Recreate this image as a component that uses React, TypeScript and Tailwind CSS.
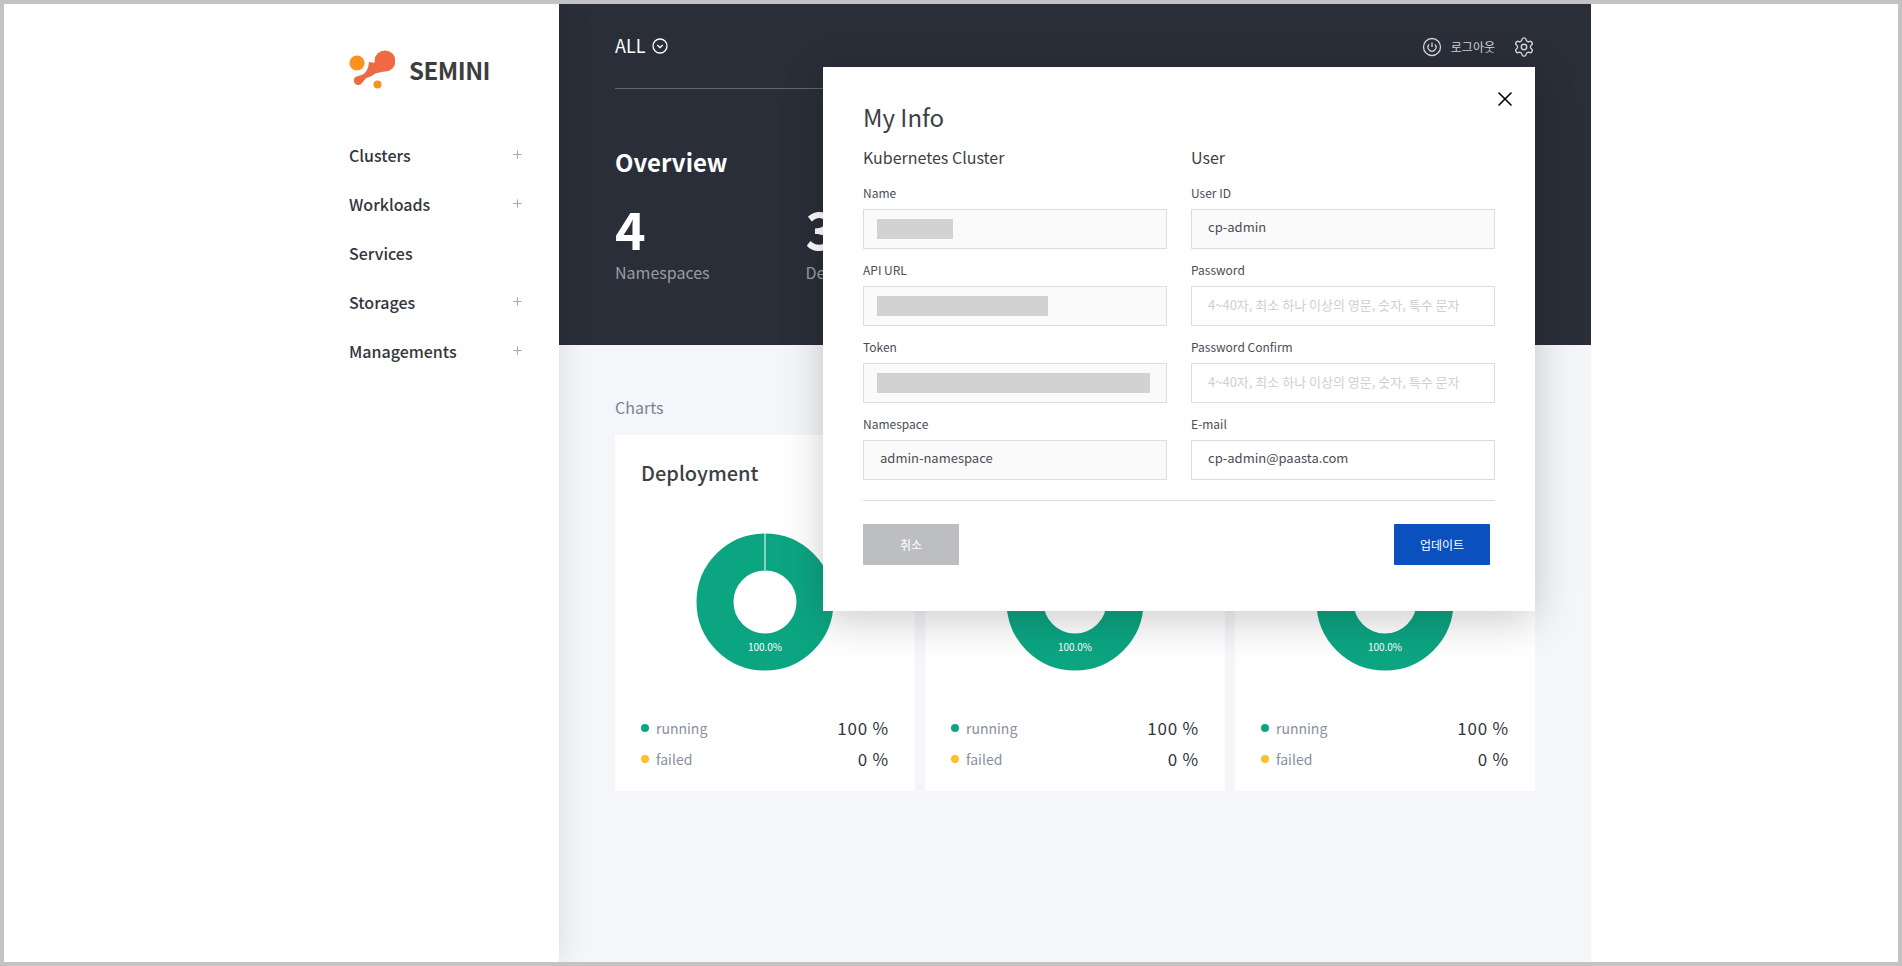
import { Plus, Settings, X } from "lucide-react";

const FONT = "font-['Noto_Sans_CJK_KR','Noto_Sans',sans-serif]";

const navItems = [
  { label: "Clusters", sub: true },
  { label: "Workloads", sub: true },
  { label: "Services", sub: false },
  { label: "Storages", sub: true },
  { label: "Managements", sub: true },
];

function Logo() {
  return (
    <div className="flex items-center gap-[14px]">
      <svg width="46" height="40" viewBox="0 0 46 40">
        <circle cx="8" cy="13" r="7.6" fill="#f7931e" />
        <circle cx="36" cy="11" r="10.5" fill="#ef6a42" />
        <path d="M28 13 C30 22 24 26 20 27 C16 28 15 31 13 33 A4.5 4.5 0 1 1 9 26 C15 25 19 22 20 12 Z" fill="#ef6a42" />
        <path d="M27 5 L37 21 L24 24 Z" fill="#ef6a42" />
        <circle cx="28.5" cy="34.5" r="4" fill="#f7931e" />
      </svg>
      <span className="text-[24px] leading-none font-bold tracking-[-0.5px] text-[#3d3d3d]">SEMINI</span>
    </div>
  );
}

function Field({ label, value, hint, bar, editable }: { label: string; value?: string; hint?: string; bar?: string; editable?: boolean }) {
  return (
    <div>
      <p className="mb-[6px] text-[12px] leading-[20px] text-[#4a4d55]">{label}</p>
      <div className={`flex h-10 items-center border border-[#dddddd] px-[16px] text-[13px] ${editable ? "bg-white" : "bg-[#fafafa]"}`}>
        {bar && <div className={`-ml-[3px] h-5 bg-[#d2d2d2] ${bar}`} />}
        {value && <span className="-mt-[4px] text-[#4a4d55]">{value}</span>}
        {hint && <span className="-mt-[2px] text-[#cfcfcf]">{hint}</span>}
      </div>
    </div>
  );
}

function ChartCard({ title }: { title?: string }) {
  return (
    <div className="flex h-[356px] w-[300px] flex-col bg-white px-[26px]">
      <h3 className="mt-[24px] h-[28px] text-[20px] leading-[28px] font-medium text-[#3d3f46]">{title}</h3>
      <div className="relative mt-[46px] flex justify-center">
        <svg width="138" height="138" viewBox="0 0 138 138">
          <circle cx="69" cy="69" r="50" fill="none" stroke="#0ca582" strokeWidth="37" />
          <line x1="69" y1="0" x2="69" y2="37" stroke="#ffffff" strokeWidth="1" />
        </svg>
        <span className="absolute top-[107px] text-[10px] leading-[14px] text-white">100.0%</span>
      </div>
      <div className="mt-[46px] flex flex-col gap-[9px]">
        <div className="flex h-[22px] items-center">
          <span className="mr-[7px] h-2 w-2 rounded-full bg-[#0ca582]" />
          <span className="text-[14px] text-[#8a8f9e]">running</span>
          <span className="ml-auto text-[17px] tracking-[0.8px] text-[#33353c]">100 %</span>
        </div>
        <div className="flex h-[22px] items-center">
          <span className="mr-[7px] h-2 w-2 rounded-full bg-[#fdbf2d]" />
          <span className="text-[14px] text-[#8a8f9e]">failed</span>
          <span className="ml-auto text-[17px] tracking-[0.8px] text-[#33353c]">0 %</span>
        </div>
      </div>
    </div>
  );
}

export default function App() {
  return (
    <div className={`${FONT} relative h-[966px] w-[1902px] overflow-hidden border-4 border-[#c3c3c3] bg-white`}>
      <div className="flex h-full">
        {/* Sidebar */}
        <aside className="relative z-10 w-[555px] bg-white pt-[46px] pl-[345px] shadow-[0_0_30px_rgba(0,0,0,0.12)]">
          <Logo />
          <nav className="mt-[40px] w-[175px]">
            {navItems.map((item) => (
              <div key={item.label} className="flex h-[49px] items-center justify-between text-[16px] font-medium text-[#33353c]">
                {item.label}
                {item.sub && <Plus size={13} className="text-[#a5a9b2]" />}
              </div>
            ))}
          </nav>
        </aside>

        {/* Main */}
        <main className="flex w-[1032px] flex-col bg-[#f4f6fa]">
          <header className="h-[341px] bg-[#2a2e38] px-[56px]">
            <div className="flex h-[85px] items-start justify-between border-b border-[#62656e] pt-[28px]">
              <div className="flex items-center gap-[6px] text-[18px] leading-[26px] text-white">
                ALL
                <svg width="16" height="16" viewBox="0 0 16 16" fill="none" stroke="#ffffff" strokeWidth="1.3" className="mt-[2px]">
                  <circle cx="8" cy="8" r="7" />
                  <path d="M5.2 7 L8 9.6 L10.8 7" />
                </svg>
              </div>
              <div className="flex items-center gap-[18px] pt-[4px] text-[#d4d5d8]">
                <div className="flex items-center gap-[9px]">
                  <svg width="20" height="20" viewBox="0 0 20 20" fill="none" stroke="currentColor" strokeWidth="1.3">
                    <circle cx="10" cy="10" r="8.5" />
                    <path d="M7 7.5 A4 4 0 1 0 13 7.5 M10 5.5 V10" />
                  </svg>
                  <span className="text-[12px]">로그아웃</span>
                </div>
                <Settings size={22} strokeWidth={1.5} />
              </div>
            </div>
            <h1 className="mt-[55px] text-[24px] leading-[36px] font-bold text-white">Overview</h1>
            <div className="mt-[16px] flex gap-[96px]">
              <div>
                <p className="text-[52px] leading-[64px] font-bold text-white">4</p>
                <p className="text-[16px] leading-[24px] text-[#9a9ca3]">Namespaces</p>
              </div>
              <div>
                <p className="text-[52px] leading-[64px] font-bold text-white">3</p>
                <p className="text-[16px] leading-[24px] text-[#9a9ca3]">Deployments</p>
              </div>
            </div>
          </header>
          <section className="px-[56px] pt-[50px]">
            <p className="mb-[16px] text-[16px] leading-[24px] text-[#7d828f]">Charts</p>
            <div className="flex gap-[10px]">
              <ChartCard title="Deployment" />
              <ChartCard />
              <ChartCard />
            </div>
          </section>
        </main>
      </div>

      {/* My Info modal */}
      <div className="absolute top-[63px] left-[819px] z-20 h-[544px] w-[712px] bg-white px-[40px] pt-[32px] shadow-[0_10px_40px_rgba(0,0,0,0.2)]">
        <X size={24} strokeWidth={1.6} className="absolute top-[20px] right-[18px] text-black" />
        <h2 className="text-[24px] leading-[36px] text-[#3d3f46]">My Info</h2>
        <div className="mt-[10px] grid grid-cols-2 gap-x-[24px]">
          <h4 className="text-[16px] leading-[24px] text-[#3d3f46]">Kubernetes Cluster</h4>
          <h4 className="text-[16px] leading-[24px] text-[#3d3f46]">User</h4>
        </div>
        <div className="mt-[14px] grid grid-cols-2 gap-x-[24px] gap-y-[11px]">
          <Field label="Name" bar="w-[76px]" />
          <Field label="User ID" value="cp-admin" />
          <Field label="API URL" bar="w-[171px]" />
          <Field label="Password" hint="4~40자, 최소 하나 이상의 영문, 숫자, 특수 문자" editable />
          <Field label="Token" bar="w-[279px]" />
          <Field label="Password Confirm" hint="4~40자, 최소 하나 이상의 영문, 숫자, 특수 문자" editable />
          <Field label="Namespace" value="admin-namespace" />
          <Field label="E-mail" value="cp-admin@paasta.com" editable />
        </div>
        <div className="mt-[20px] flex justify-between border-t border-[#dddddd] pt-[23px] pr-[5px]">
          <button className="h-[41px] w-[96px] rounded-[1px] bg-[#bdbec2] text-[12px] text-white">취소</button>
          <button className="h-[41px] w-[96px] rounded-[1px] bg-[#0a50bf] text-[12px] text-white">업데이트</button>
        </div>
      </div>
    </div>
  );
}
